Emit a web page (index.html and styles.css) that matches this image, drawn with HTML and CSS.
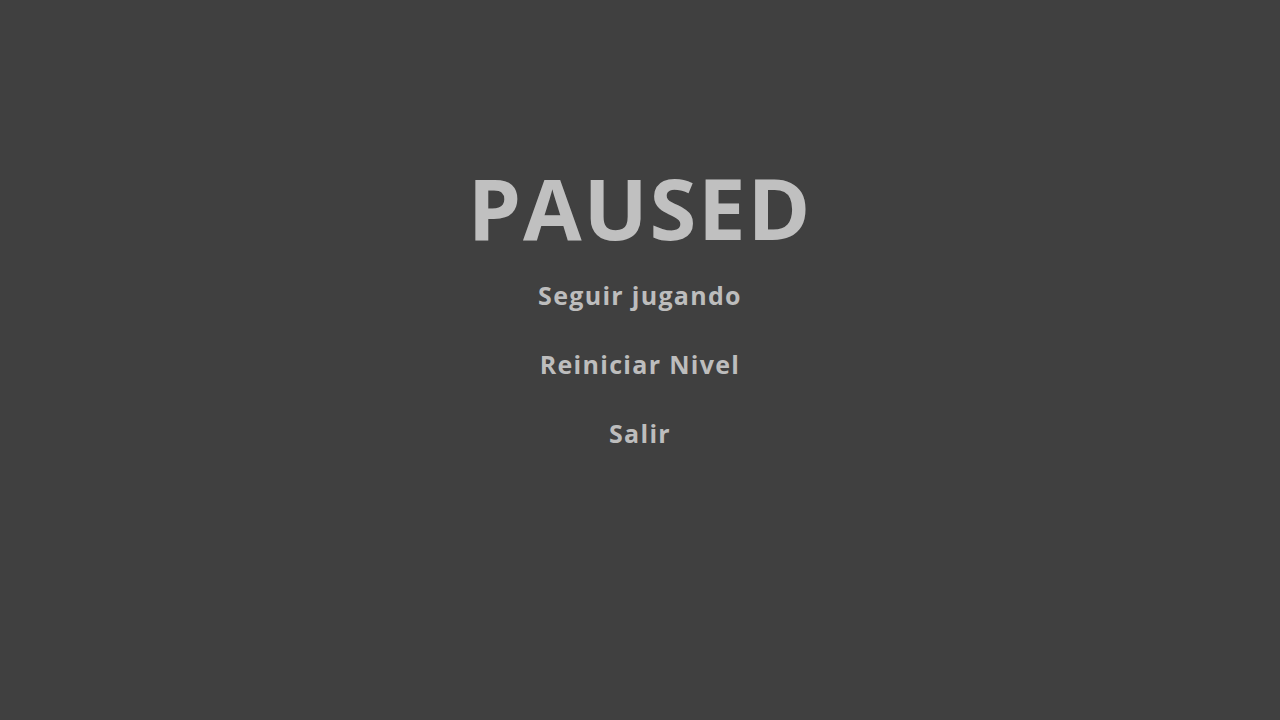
FILE: index.html
```html
<!DOCTYPE html>
<html lang="es">
<head>
<meta charset="utf-8">
<title>Paused</title>
<link rel="stylesheet" href="styles.css">
</head>
<body>
<main class="pause">
  <h1 class="pause-title">PAUSED</h1>
  <nav class="pause-menu">
    <a class="pause-item" href="#">Seguir jugando</a>
    <a class="pause-item" href="#">Reiniciar Nivel</a>
    <a class="pause-item" href="#">Salir</a>
  </nav>
</main>
</body>
</html>
```

FILE: styles.css
```css
html, body {
  margin: 0;
  padding: 0;
  height: 100%;
}
body {
  background: #404040;
  color: #c0c0c0;
  font-family: "Open Sans", "Lato", sans-serif;
}
.pause {
  display: flex;
  flex-direction: column;
  align-items: center;
  padding-top: 157px;
}
.pause-title {
  margin: 0;
  font-size: 85px;
  font-weight: 700;
  line-height: 100px;
  letter-spacing: 1.8px;
}
.pause-menu {
  display: flex;
  flex-direction: column;
  align-items: center;
  gap: 37px;
  margin-top: 22px;
}
.pause-item {
  color: #bdbdbd;
  text-decoration: none;
  font-size: 25px;
  font-weight: 700;
  line-height: 32px;
  letter-spacing: 1.3px;
}
```
